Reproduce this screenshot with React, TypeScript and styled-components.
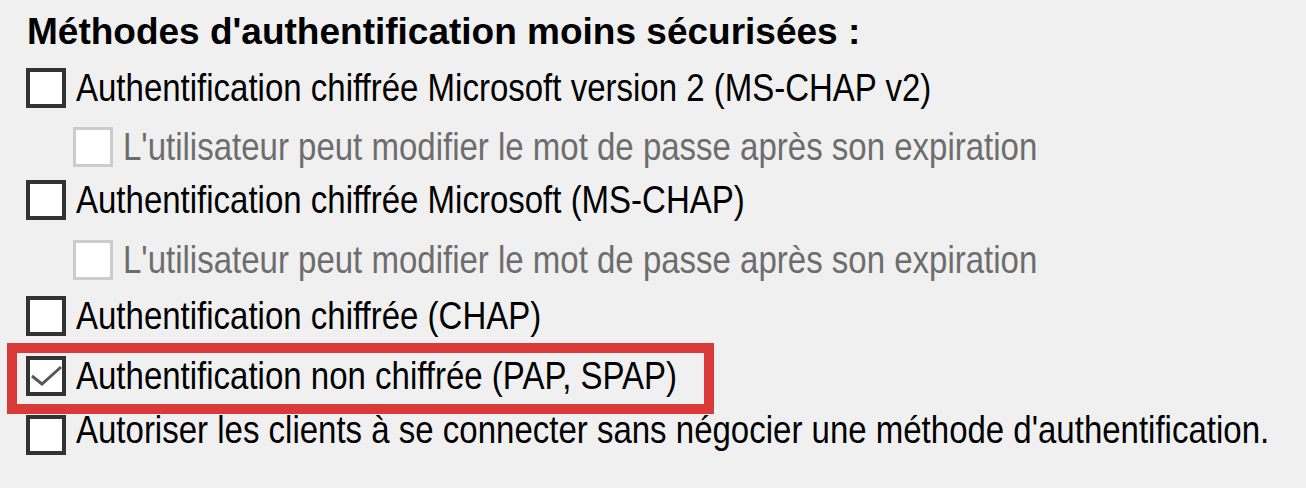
import React from 'react';
import styled, { createGlobalStyle } from 'styled-components';

const GlobalStyle = createGlobalStyle`
  html, body {
    margin: 0;
    padding: 0;
    background: #f0f0f0;
    overflow: hidden;
  }
`;

const Panel = styled.div`
  display: flex;
  flex-direction: column;
  align-items: flex-start;
  width: 1306px;
  height: 488px;
  box-sizing: border-box;
  padding: 10px 0 0 26px;
  background: #f0f0f0;
  font-family: "Liberation Sans", Arial, sans-serif;
  color: #000;
  overflow: hidden;
`;

const Title = styled.div`
  margin-left: 1px;
  font-size: 37px;
  font-weight: bold;
  line-height: 44px;
  white-space: nowrap;
`;

const Row = styled.div<{ $top: number; $indent?: number }>`
  display: flex;
  align-items: center;
  gap: 10px;
  height: 40px;
  margin-top: ${(p) => p.$top}px;
  margin-left: ${(p) => p.$indent || 0}px;
`;

const Box = styled.div<{ $disabled?: boolean }>`
  flex: none;
  width: 40px;
  height: 40px;
  box-sizing: border-box;
  background: #fff;
  border: ${(p) => (p.$disabled ? '3px solid #cccccc' : '4px solid #333333')};
  display: flex;
  align-items: center;
  justify-content: center;
`;

/* the dialog font is narrow and tall: draw at the width, stretch the height */
const Label = styled.span<{ $disabled?: boolean; $raise?: number }>`
  display: inline-block;
  font-size: 33px;
  line-height: 40px;
  white-space: nowrap;
  color: ${(p) => (p.$disabled ? '#6d6d6d' : '#000')};
  padding-bottom: ${(p) => (p.$raise || 0) * 2}px;
  transform: scaleY(1.18);
`;

const Highlight = styled.div`
  width: 707px;
  box-sizing: border-box;
  margin: 7px 0 0 -19px;
  padding: 3px 0 8px 9px;
  border: 10px solid #da3a37;
`;

function Check() {
  return (
    <svg width="32" height="32" viewBox="4 4 32 32">
      <polyline
        points="6,20 16,28 35,11"
        fill="none"
        stroke="#575757"
        strokeWidth="3"
      />
    </svg>
  );
}

type OptionProps = {
  label: string;
  top: number;
  sub?: boolean;
  checked?: boolean;
  raise?: number;
};

function Option({ label, top, sub, checked, raise }: OptionProps) {
  return (
    <Row $top={top} $indent={sub ? 47 : 0}>
      <Box $disabled={sub}>{checked && <Check />}</Box>
      <Label $disabled={sub} $raise={raise}>{label}</Label>
    </Row>
  );
}

export default function App() {
  return (
    <>
      <GlobalStyle />
      <Panel>
        <Title>Méthodes d'authentification moins sécurisées :</Title>
        <Option top={14} label="Authentification chiffrée Microsoft version 2 (MS-CHAP v2)" />
        <Option top={19} sub label="L'utilisateur peut modifier le mot de passe après son expiration" />
        <Option top={13} label="Authentification chiffrée Microsoft (MS-CHAP)" />
        <Option top={20} sub label="L'utilisateur peut modifier le mot de passe après son expiration" />
        <Option top={16} label="Authentification chiffrée (CHAP)" />
        <Highlight>
          <Option top={0} checked label="Authentification non chiffrée (PAP, SPAP)" />
        </Highlight>
        <Option
          top={1}
          raise={4}
          label="Autoriser les clients à se connecter sans négocier une méthode d'authentification."
        />
      </Panel>
    </>
  );
}
